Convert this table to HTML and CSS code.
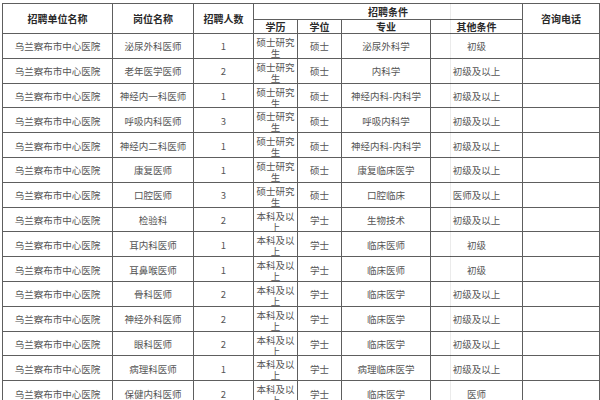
FILE: index.html
```html
<!DOCTYPE html>
<html lang="zh-CN">
<head>
<meta charset="utf-8">
<title>招聘</title>
<link rel="stylesheet" href="styles.css">
</head>
<body>
<div class="sheet">
<table class="grid">
<colgroup>
<col class="c1"><col class="c2"><col class="c3"><col class="c4"><col class="c5"><col class="c6"><col class="c7"><col class="c8">
</colgroup>
<thead>
<tr class="h1">
<th rowspan="2">招聘单位名称</th>
<th rowspan="2">岗位名称</th>
<th rowspan="2">招聘人数</th>
<th colspan="4">招聘条件</th>
<th rowspan="2">咨询电话</th>
</tr>
<tr class="h2">
<th>学历</th><th>学位</th><th>专业</th><th>其他条件</th>
</tr>
</thead>
<tbody>
<tr><td>乌兰察布市中心医院</td><td>泌尿外科医师</td><td>1</td><td class="edu"><div class="wrap">硕士研究生</div></td><td>硕士</td><td>泌尿外科学</td><td>初级</td><td></td></tr>
<tr><td>乌兰察布市中心医院</td><td>老年医学医师</td><td>2</td><td class="edu"><div class="wrap">硕士研究生</div></td><td>硕士</td><td>内科学</td><td>初级及以上</td><td></td></tr>
<tr><td>乌兰察布市中心医院</td><td>神经内一科医师</td><td>1</td><td class="edu"><div class="wrap">硕士研究生</div></td><td>硕士</td><td>神经内科-内科学</td><td>初级及以上</td><td></td></tr>
<tr><td>乌兰察布市中心医院</td><td>呼吸内科医师</td><td>3</td><td class="edu"><div class="wrap">硕士研究生</div></td><td>硕士</td><td>呼吸内科学</td><td>初级及以上</td><td></td></tr>
<tr><td>乌兰察布市中心医院</td><td>神经内二科医师</td><td>1</td><td class="edu"><div class="wrap">硕士研究生</div></td><td>硕士</td><td>神经内科-内科学</td><td>初级及以上</td><td></td></tr>
<tr><td>乌兰察布市中心医院</td><td>康复医师</td><td>1</td><td class="edu"><div class="wrap">硕士研究生</div></td><td>硕士</td><td>康复临床医学</td><td>初级及以上</td><td></td></tr>
<tr><td>乌兰察布市中心医院</td><td>口腔医师</td><td>3</td><td class="edu"><div class="wrap">硕士研究生</div></td><td>硕士</td><td>口腔临床</td><td>医师及以上</td><td></td></tr>
<tr><td>乌兰察布市中心医院</td><td>检验科</td><td>2</td><td class="edu"><div class="wrap">本科及以上</div></td><td>学士</td><td>生物技术</td><td>初级及以上</td><td></td></tr>
<tr><td>乌兰察布市中心医院</td><td>耳内科医师</td><td>1</td><td class="edu"><div class="wrap">本科及以上</div></td><td>学士</td><td>临床医师</td><td>初级</td><td></td></tr>
<tr><td>乌兰察布市中心医院</td><td>耳鼻喉医师</td><td>1</td><td class="edu"><div class="wrap">本科及以上</div></td><td>学士</td><td>临床医师</td><td>初级</td><td></td></tr>
<tr><td>乌兰察布市中心医院</td><td>骨科医师</td><td>2</td><td class="edu"><div class="wrap">本科及以上</div></td><td>学士</td><td>临床医学</td><td>初级及以上</td><td></td></tr>
<tr><td>乌兰察布市中心医院</td><td>神经外科医师</td><td>2</td><td class="edu"><div class="wrap">本科及以上</div></td><td>学士</td><td>临床医学</td><td>初级及以上</td><td></td></tr>
<tr><td>乌兰察布市中心医院</td><td>眼科医师</td><td>2</td><td class="edu"><div class="wrap">本科及以上</div></td><td>学士</td><td>临床医学</td><td>初级及以上</td><td></td></tr>
<tr><td>乌兰察布市中心医院</td><td>病理科医师</td><td>1</td><td class="edu"><div class="wrap">本科及以上</div></td><td>学士</td><td>病理临床医学</td><td>初级及以上</td><td></td></tr>
<tr><td>乌兰察布市中心医院</td><td>保健内科医师</td><td>2</td><td class="edu"><div class="wrap">本科及以上</div></td><td>学士</td><td>临床医学</td><td>医师</td><td></td></tr>
</tbody>
</table>
<div class="crease"></div>
</div>
</body>
</html>
```
FILE: styles.css
```css
html, body {
  margin: 0;
  padding: 0;
  background: #ffffff;
  overflow: hidden;
}
body {
  padding: 3px 0 0 2px;
  font-family: "Noto Sans CJK SC", "Noto Sans", sans-serif;
}
.sheet {
  position: relative;
  width: 597px;
}
.grid {
  border-collapse: collapse;
  table-layout: fixed;
  width: 597px;
  color: #555;
}
.c1 { width: 110px; }
.c2 { width: 81px; }
.c3 { width: 60px; }
.c4 { width: 44px; }
.c5 { width: 44px; }
.c6 { width: 89px; }
.c7 { width: 92px; }
.c8 { width: 77px; }
.grid th, .grid td {
  border: 1px solid #5e5e5e;
  padding: 0;
  text-align: center;
  white-space: nowrap;
}
.grid th {
  font-size: 10px;
  font-weight: bold;
  color: #2a2a2a;
  line-height: 12px;
}
.h1 th { height: 15px; }
.h2 th { height: 13px; }
.grid td {
  font-size: 9.5px;
  line-height: 11px;
  height: 24.8px;
  box-sizing: border-box;
  padding-top: 2px;
  vertical-align: middle;
}
.grid td.edu {
  white-space: normal;
  vertical-align: top;
  padding-top: 3px;
}
.wrap {
  line-height: 11px;
  word-break: break-all;
  margin-bottom: -6px;
}
.crease {
  position: absolute;
  left: 448px;
  top: 0;
  bottom: 0;
  width: 1px;
  background: rgba(0, 0, 0, 0.08);
}
```
